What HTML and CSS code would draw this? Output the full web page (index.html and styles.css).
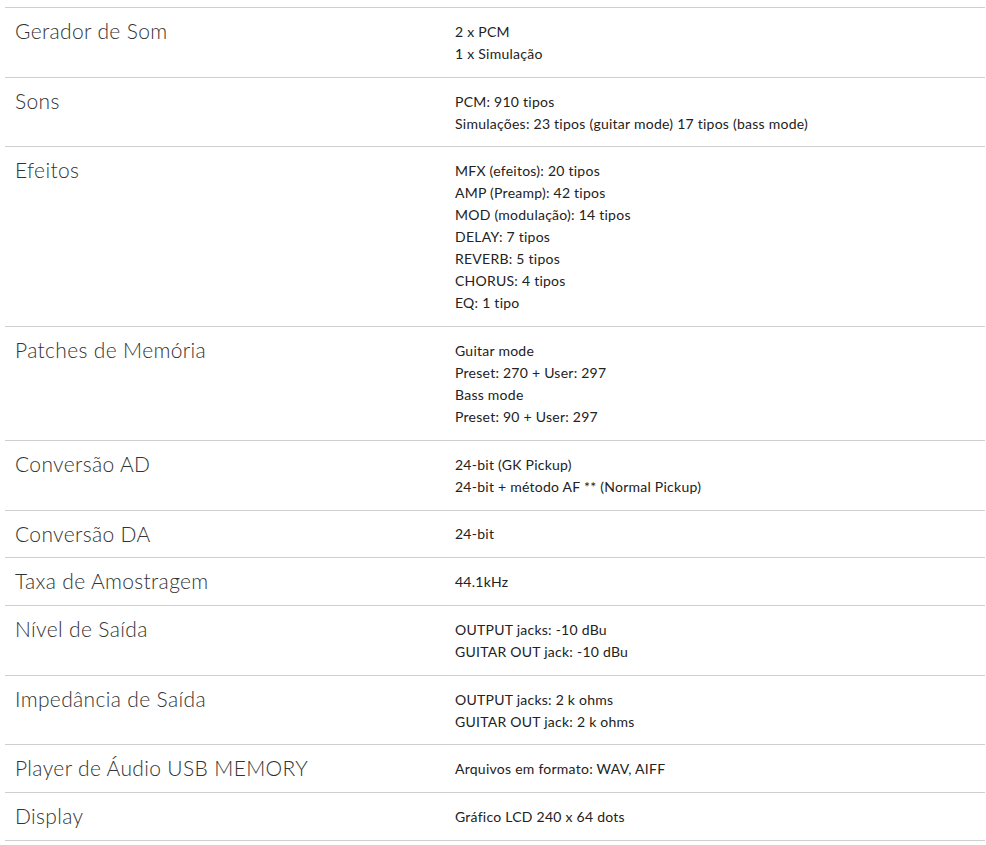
FILE: index.html
```html
<!DOCTYPE html>
<html lang="pt">
<head>
<meta charset="utf-8">
<title>Especificações</title>
<link rel="stylesheet" href="styles.css">
</head>
<body>
<table class="specs">
  <tbody>
    <tr><th class="label">Gerador de Som</th><td class="value">2 x PCM<br>1 x Simulação</td></tr>
    <tr><th class="label">Sons</th><td class="value">PCM: 910 tipos<br>Simulações: 23 tipos (guitar mode) 17 tipos (bass mode)</td></tr>
    <tr><th class="label">Efeitos</th><td class="value">MFX (efeitos): 20 tipos<br>AMP (Preamp): 42 tipos<br>MOD (modulação): 14 tipos<br>DELAY: 7 tipos<br>REVERB: 5 tipos<br>CHORUS: 4 tipos<br>EQ: 1 tipo</td></tr>
    <tr><th class="label">Patches de Memória</th><td class="value">Guitar mode<br>Preset: 270 + User: 297<br>Bass mode<br>Preset: 90 + User: 297</td></tr>
    <tr><th class="label">Conversão AD</th><td class="value">24-bit (GK Pickup)<br>24-bit + método AF ** (Normal Pickup)</td></tr>
    <tr><th class="label">Conversão DA</th><td class="value">24-bit</td></tr>
    <tr><th class="label">Taxa de Amostragem</th><td class="value">44.1kHz</td></tr>
    <tr><th class="label">Nível de Saída</th><td class="value">OUTPUT jacks: -10 dBu<br>GUITAR OUT jack: -10 dBu</td></tr>
    <tr><th class="label">Impedância de Saída</th><td class="value">OUTPUT jacks: 2 k ohms<br>GUITAR OUT jack: 2 k ohms</td></tr>
    <tr><th class="label">Player de Áudio USB MEMORY</th><td class="value">Arquivos em formato: WAV, AIFF</td></tr>
    <tr><th class="label">Display</th><td class="value">Gráfico LCD 240 x 64 dots</td></tr>
  </tbody>
</table>
</body>
</html>
```
FILE: styles.css
```css
html, body {
  margin: 0;
  padding: 0;
  background: #ffffff;
}
body {
  padding: 7px 1px 0 5px;
  font-family: Lato, "Liberation Sans", sans-serif;
  color: #333333;
}
.specs {
  width: 100%;
  border-collapse: collapse;
  border-top: 1px solid #cfcfcf;
}
.specs tr {
  border-bottom: 1px solid #cfcfcf;
}
.label {
  width: 440px;
  box-sizing: border-box;
  text-align: left;
  vertical-align: top;
  font-weight: 300;
  font-size: 21px;
  line-height: 24px;
  letter-spacing: 0.35px;
  padding: 11px 10px 0 10px;
  color: #333333;
}
.value {
  vertical-align: top;
  font-size: 14px;
  line-height: 22px;
  letter-spacing: 0.25px;
  padding: 12.9px 10px 11.83px 10px;
  color: #222222;
}
```
